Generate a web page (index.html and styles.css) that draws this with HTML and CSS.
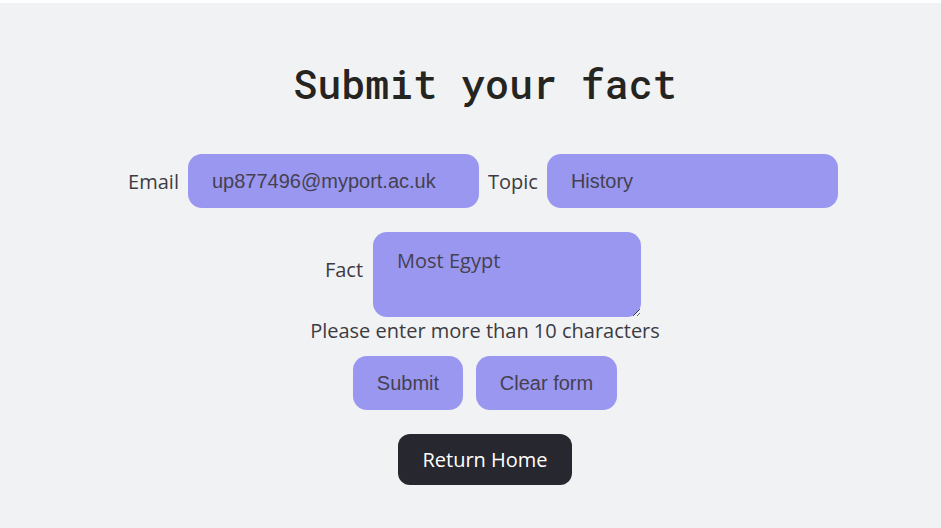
FILE: index.html
```html
<!DOCTYPE html>
<html lang="en">
<head>
<meta charset="utf-8">
<title>Submit your fact</title>
<link rel="stylesheet" href="styles.css">
</head>
<body>
<main class="page">
  <h1 class="title">Submit your fact</h1>
  <form class="fact-form">
    <div class="row">
      <label class="label" for="email">Email</label>
      <input class="field" id="email" type="text" value="up877496@myport.ac.uk">
      <label class="label" for="topic">Topic</label>
      <input class="field" id="topic" type="text" value="History">
    </div>
    <div class="row row-fact">
      <label class="label label-fact" for="fact">Fact</label>
      <textarea class="area" id="fact">Most Egypt</textarea>
    </div>
    <p class="hint">Please enter more than 10 characters</p>
    <div class="actions">
      <button type="button" class="btn btn-submit">Submit</button>
      <button type="button" class="btn btn-clear">Clear form</button>
    </div>
  </form>
  <a class="home" href="#">Return Home</a>
</main>
</body>
</html>
```
FILE: styles.css
```css
html, body {
  margin: 0;
  padding: 0;
}
body {
  background: #f1f2f4;
  border-top: 3px solid #ffffff;
  font-family: "Open Sans", "Liberation Sans", sans-serif;
  color: #3d3b42;
}
.page {
  display: flex;
  flex-direction: column;
  align-items: center;
  padding: 57px 0 0 29px;
}
.title {
  margin: 0;
  font-family: "Roboto Mono", "DejaVu Sans Mono", monospace;
  font-weight: 500;
  font-size: 40px;
  line-height: 48px;
  color: #26241f;
  letter-spacing: -0.05px;
}
.fact-form {
  display: flex;
  flex-direction: column;
  align-items: center;
  margin-top: 46px;
}
.row {
  display: flex;
  align-items: center;
  gap: 9px;
  margin-left: -4px;
}
.row-fact {
  margin-top: 24px;
  gap: 10px;
}
.label {
  font-size: 20px;
  line-height: 27px;
  color: #3d3b42;
}
.label-fact {
  margin-bottom: 10px;
}
.field {
  box-sizing: border-box;
  width: 291px;
  height: 54px;
  border: none;
  border-radius: 14px;
  background: #9a97f1;
  padding: 0 24px;
  font-family: "Liberation Sans", Arial, sans-serif;
  font-size: 20px;
  color: #45414f;
  outline: none;
}
.area {
  box-sizing: border-box;
  width: 268px;
  height: 85px;
  border: none;
  border-radius: 14px;
  background: #9a97f1;
  padding: 15px 24px 0;
  font-family: "Open Sans", sans-serif;
  font-size: 20px;
  line-height: 27px;
  color: #45414f;
  outline: none;
}
.hint {
  margin: 0;
  font-size: 20px;
  line-height: 27px;
  color: #3d3b42;
}
.actions {
  display: flex;
  gap: 13px;
  margin-top: 12px;
}
.btn {
  height: 54px;
  border: none;
  border-radius: 14px;
  background: #9a97f1;
  font-family: "Liberation Sans", Arial, sans-serif;
  font-size: 20px;
  color: #45414f;
  padding: 0 8px;
  white-space: nowrap;
  cursor: pointer;
}
.btn-submit {
  width: 110px;
}
.btn-clear {
  width: 141px;
}
.home {
  box-sizing: border-box;
  display: flex;
  align-items: center;
  justify-content: center;
  margin-top: 24px;
  width: 174px;
  height: 51px;
  border-radius: 12px;
  background: #27272f;
  color: #ffffff;
  font-size: 20px;
  text-decoration: none;
}
```
